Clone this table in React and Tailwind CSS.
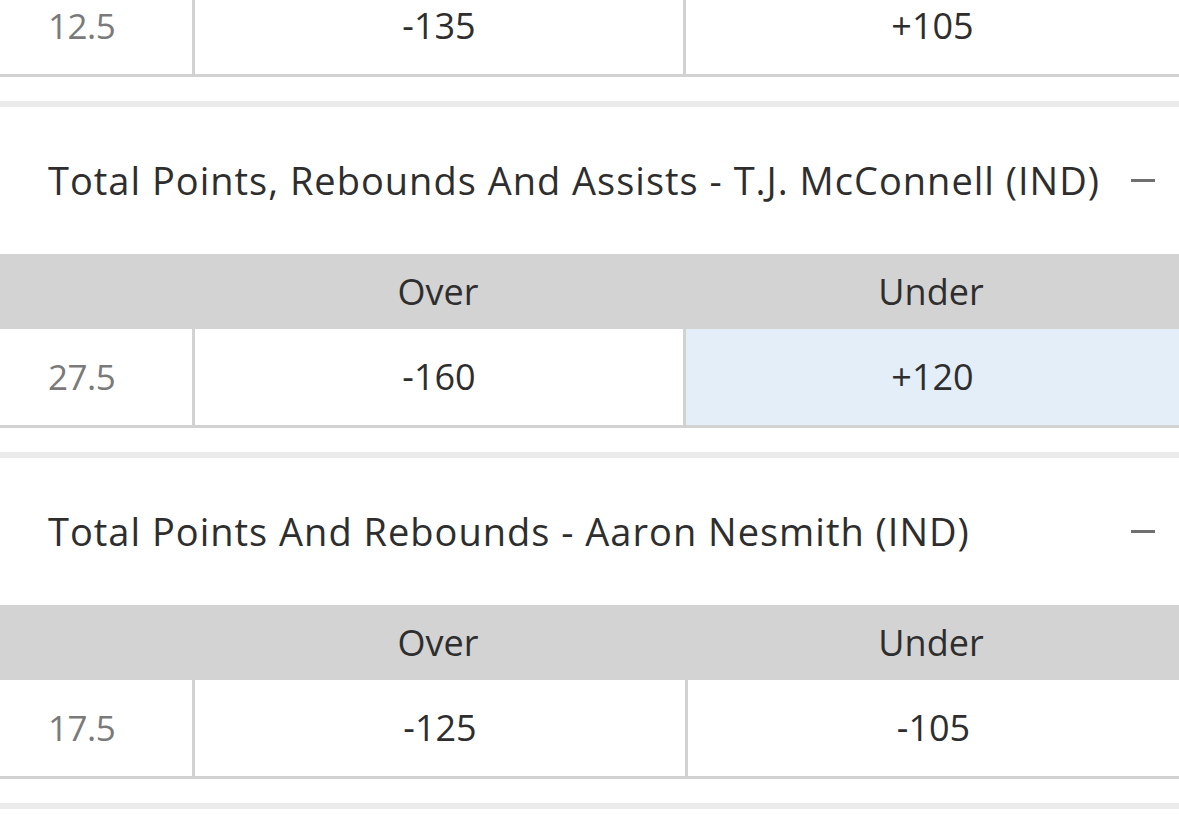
import React from "react";

const markets = [
    {
        title: "Total Points, Rebounds And Assists - T.J. McConnell (IND)",
        line: "27.5",
        over: "-160",
        under: "+120",
        picked: "under",
        wide: false,
    },
    {
        title: "Total Points And Rebounds - Aaron Nesmith (IND)",
        line: "17.5",
        over: "-125",
        under: "-105",
        picked: null,
        wide: true,
    },
];

function OddsRow({ line, over, under, picked, wide }) {
    return (
        <div
            className={
                wide
                    ? "grid grid-cols-[192px_493px_1fr] h-[99px] border-b-[3px] border-[#d2d2d2]"
                    : "grid grid-cols-[192px_491px_1fr] h-[99px] border-b-[3px] border-[#d2d2d2]"
            }
        >
            <div className="flex items-center pl-12 text-[35px] tracking-[-0.5px] text-[#7a7a7a]">{line}</div>
            <div className="flex items-center justify-center border-l-[3px] border-[#d2d2d2] text-[36px] text-[#2e2e2e]">
                {over}
            </div>
            <div
                className={
                    picked === "under"
                        ? "flex items-center justify-center border-l-[3px] border-[#d2d2d2] bg-[#e3eef8] text-[36px] text-[#2e2e2e]"
                        : "flex items-center justify-center border-l-[3px] border-[#d2d2d2] text-[36px] text-[#2e2e2e]"
                }
            >
                {under}
            </div>
        </div>
    );
}

function Market({ title, line, over, under, picked, wide }) {
    return (
        <section className="border-t-[6px] border-[#ebebeb]">
            <div className="h-[147px] flex items-center justify-between pl-12 pr-6">
                <h2 className="text-[38px] tracking-[1px] text-[#2e2e2e] whitespace-nowrap">{title}</h2>
                <span className="block w-6 h-[3px] bg-[#707070]" />
            </div>
            <div className="grid grid-cols-[193px_490px_1fr] h-[75px] bg-[#d3d3d3] text-[36px] text-[#2e2e2e]">
                <div />
                <div className="flex items-center justify-center">Over</div>
                <div className="flex items-center justify-center">Under</div>
            </div>
            <OddsRow line={line} over={over} under={under} picked={picked} wide={wide} />
            <div className="h-6" />
        </section>
    );
}

export default function App() {
    return (
        <div
            className="w-[1179px] h-[814px] overflow-hidden bg-white"
            style={{ fontFamily: "'Open Sans', 'Liberation Sans', sans-serif" }}
        >
            <div className="-mt-[22px]">
                <OddsRow line="12.5" over="-135" under="+105" picked={null} wide={false} />
                <div className="h-6" />
            </div>
            {markets.map((m) => (
                <Market key={m.title} {...m} />
            ))}
            <div className="border-t-[6px] border-[#ebebeb]" />
        </div>
    );
}
